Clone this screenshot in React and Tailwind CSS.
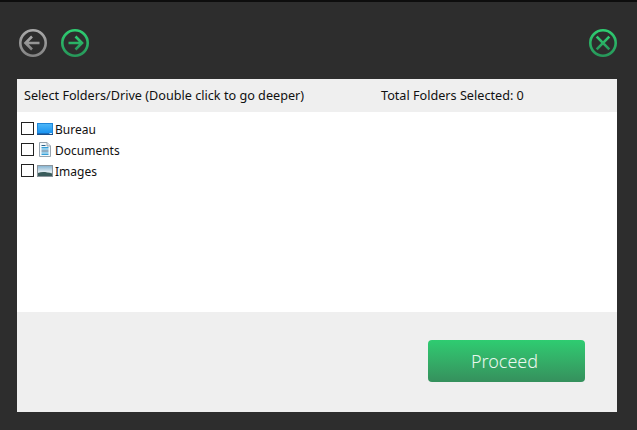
import { useState } from "react";

const font = "font-['Noto_Sans','Open_Sans',sans-serif]";

function ArrowIcon({ dir = "right", color = "#2ecc71", grad = "#27985a" }) {
  const id = "ring-" + dir;
  return (
    <svg width="30" height="30" viewBox="0 0 30 30" fill="none">
      <defs>
        <linearGradient id={id} x1="0" y1="0" x2="0" y2="1">
          <stop offset="0" stopColor={color} />
          <stop offset="1" stopColor={grad} />
        </linearGradient>
      </defs>
      <circle cx="15" cy="15" r="12.7" stroke={`url(#${id})`} strokeWidth="2.6" />
      {dir === "right" && (
        <path d="M8.500 15h13M15.500 8.500l6.500 6.500-6.500 6.500" stroke={`url(#${id})`} strokeWidth="2.600" />
      )}
      {dir === "left" && (
        <path d="M21.500 15H8M14 8.500L7.500 15l6.500 6.500" stroke={`url(#${id})`} strokeWidth="2.600" />
      )}
      {dir === "close" && (
        <path d="M8.700 8.700l12.600 12.600M21.300 8.700L8.700 21.300" stroke={`url(#${id})`} strokeWidth="2.600" />
      )}
    </svg>
  );
}

function DesktopIcon() {
  return (
    <svg width="16" height="12" viewBox="0 0 16 12">
      <defs>
        <linearGradient id="desk" x1="0" y1="0" x2="0" y2="1">
          <stop offset="0" stopColor="#4fb8f8" />
          <stop offset="1" stopColor="#1590f0" />
        </linearGradient>
      </defs>
      <rect x=".5" y=".5" width="15" height="10.500" fill="url(#desk)" stroke="#1f86d8" />
      <rect x="0" y="10.500" width="16" height="1.500" fill="#1a4f8c" />
      <path d="M12.500 10.500h2.500" stroke="#d8eefc" strokeWidth="1" />
    </svg>
  );
}

function DocIcon() {
  return (
    <svg width="12" height="15" viewBox="0 0 12 15">
      <path d="M.5.5h7.500l3.500 3.500v10.500H.5z" fill="#f4f9fc" stroke="#98a4ae" />
      <path d="M8 .5V4h3.500" fill="#dfe6ec" stroke="#98a4ae" />
      <path d="M2.500 3.500h4M2.500 9h7" stroke="#2b5f86" strokeWidth="1" />
      <path d="M2.500 5.500h7M2.500 7h7M2.500 11h7M2.500 12.500h7" stroke="#35a0d8" strokeWidth="1" />
    </svg>
  );
}

function PictureIcon() {
  return (
    <svg width="16" height="12" viewBox="0 0 16 12">
      <defs>
        <linearGradient id="sky" x1="0" y1="0" x2="0" y2="1">
          <stop offset="0" stopColor="#7fb0cf" />
          <stop offset="0.6" stopColor="#e6eff4" />
          <stop offset="1" stopColor="#6f9a88" />
        </linearGradient>
      </defs>
      <rect x=".5" y=".5" width="15" height="11" fill="url(#sky)" stroke="#8c959c" />
      <path d="M1 8c4-1.500 8-1 14 .500V11H1z" fill="#3a5c5c" />
    </svg>
  );
}

const folders = [
  { name: "Bureau", icon: <DesktopIcon /> },
  { name: "Documents", icon: <DocIcon /> },
  { name: "Images", icon: <PictureIcon /> },
];

export default function App() {
  const [checked] = useState({});

  return (
    <div className={`${font} w-[637px] h-[430px] bg-[#2d2d2d] border-t-2 border-[#0d0d0d] flex flex-col overflow-hidden`}>
      <div className="h-[77px] pl-[18px] pr-[19px] pt-[26px] flex items-start">
        <div className="flex gap-[12px]">
          <ArrowIcon dir="left" color="#a8a8a8" grad="#858585" />
          <ArrowIcon dir="right" />
        </div>
        <div className="ml-auto">
          <ArrowIcon dir="close" />
        </div>
      </div>

      <div className="mx-[17px] w-[600px] h-[333px] flex flex-col">
        <div className="h-[33px] bg-[#efefef] flex items-center pl-[7px] text-[12.65px] text-[#111]">
          <span className="w-[357px]">Select Folders/Drive (Double click to go deeper)</span>
          <span>Total Folders Selected: 0</span>
        </div>

        <div className="h-[200px] bg-white pt-[7px] pl-[4px]">
          {folders.map((f) => (
            <div key={f.name} className="h-[21px] flex items-center text-[12px] text-[#111]">
              <input
                type="checkbox"
                checked={!!checked[f.name]}
                readOnly
                className="appearance-none w-[13px] h-[13px] mb-[2px] border border-[#222] bg-white"
              />
              <span className="w-[16px] ml-[3px] mb-[2px] flex justify-center">{f.icon}</span>
              <span className="ml-[2px]">{f.name}</span>
            </div>
          ))}
        </div>

        <div className="h-[100px] bg-[#efefef] pt-[28px] pl-[411px]">
          <button className="w-[157px] h-[42px] pr-[4px] rounded-[4px] bg-gradient-to-b from-[#2ecc71] to-[#35905d] text-[#e9f7ee] text-[18px] font-light">
            Proceed
          </button>
        </div>
      </div>
    </div>
  );
}
